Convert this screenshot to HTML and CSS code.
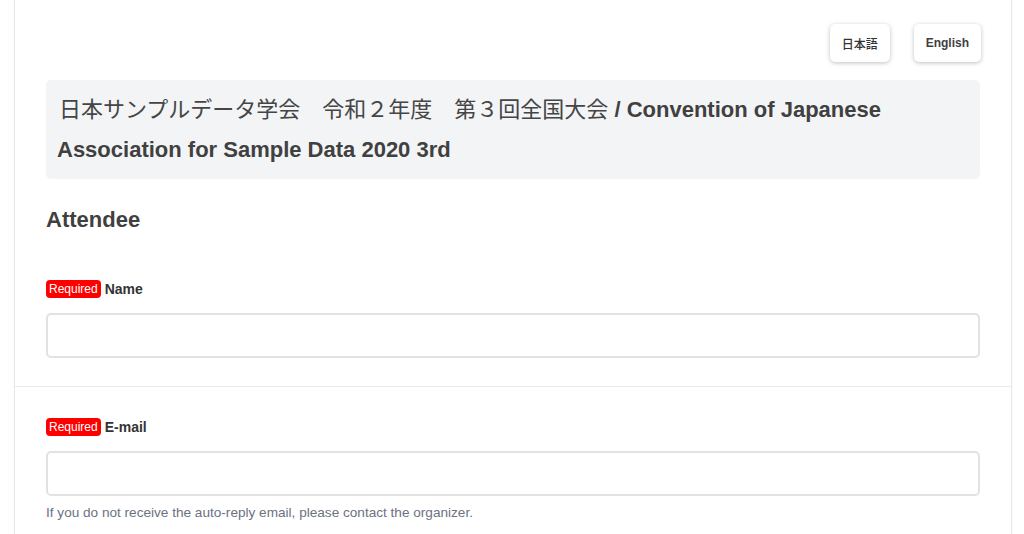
FILE: index.html
```html
<!DOCTYPE html>
<html lang="ja">
<head>
  <meta charset="utf-8">
  <title>Convention of Japanese Association for Sample Data 2020 3rd</title>
  <link rel="stylesheet" href="styles.css">
</head>
<body>
  <div class="page">
    <section class="block">
      <div class="lang-bar">
        <button type="button" class="lang-btn jp-btn">日本語</button>
        <button type="button" class="lang-btn">English</button>
      </div>
      <div class="title-box">
        <h1><span class="jp">日本サンプルデータ学会　令和２年度　第３回全国大会</span> / Convention of Japanese Association for Sample Data 2020 3rd</h1>
      </div>
      <h2>Attendee</h2>
      <div class="field first">
        <label for="name"><span class="req">Required</span> Name</label>
        <input type="text" id="name" name="name">
      </div>
    </section>
    <section class="block">
      <div class="field">
        <label for="email"><span class="req">Required</span> E-mail</label>
        <input type="text" id="email" name="email">
        <p class="help">If you do not receive the auto-reply email, please contact the organizer.</p>
      </div>
    </section>
  </div>
</body>
</html>
```

FILE: styles.css
```css
body {
  margin: 0;
  background-color: #ffffff;
  font-family: "Liberation Sans", Arial, "Noto Sans CJK JP", sans-serif;
  color: #404040;
}

.page {
  width: 996px;
  margin: 0 0 0 14px;
  min-height: 534px;
  border-left: 1px solid #e6e6e6;
  border-right: 1px solid #e6e6e6;
  box-shadow: 0 0 3px rgba(0, 0, 0, 0.04);
}

.block {
  padding: 0 31px 28px 31px;
  border-bottom: 1px solid #ebebeb;
}

.block + .block {
  padding-top: 31px;
  border-bottom: none;
}

.lang-bar {
  display: flex;
  justify-content: flex-end;
  gap: 24px;
  padding-top: 24px;
  margin-right: -1px;
}

.lang-btn {
  height: 38px;
  padding: 0 12px;
  background-color: #ffffff;
  border: none;
  border-radius: 5px;
  box-shadow: 0 1px 4px rgba(0, 0, 0, 0.25);
  font-family: "Liberation Sans", Arial, "Noto Sans CJK JP", sans-serif;
  font-size: 12px;
  font-weight: bold;
  color: #404040;
  cursor: pointer;
}

.lang-btn.jp-btn {
  font-family: "Noto Sans CJK JP", sans-serif;
  font-weight: 500;
  color: #333333;
}

.title-box {
  margin-top: 18px;
  padding: 10px 12px 9px 11px;
  background-color: #f3f4f6;
  border-radius: 5px;
}

h1 {
  margin: 0;
  font-size: 22px;
  line-height: 40px;
  font-weight: bold;
}

h1 .jp {
  font-weight: normal;
  font-family: "Noto Sans CJK JP", sans-serif;
  line-height: 20px;
  padding-left: 2px;
  color: #454545;
}

h2 {
  margin: 26px 0 0 0;
  font-size: 22px;
  line-height: 30px;
  font-weight: bold;
}

.field.first {
  margin-top: 45px;
}

.field label {
  display: flex;
  align-items: center;
  gap: 4px;
  height: 18px;
  font-size: 14px;
  font-weight: bold;
  color: #333333;
}

.req {
  display: inline-flex;
  align-items: center;
  height: 18px;
  padding: 0 3px;
  background-color: #ff0000;
  color: #ffffff;
  border-radius: 4px;
  font-size: 12px;
  font-weight: normal;
}

.field input {
  display: block;
  box-sizing: border-box;
  width: 100%;
  height: 45px;
  margin-top: 15px;
  border: 2px solid #e2e2e2;
  border-radius: 5px;
  background-color: #ffffff;
}

.help {
  margin: 8px 0 0 0;
  font-size: 13.6px;
  line-height: 18px;
  color: #6b7280;
}
```
